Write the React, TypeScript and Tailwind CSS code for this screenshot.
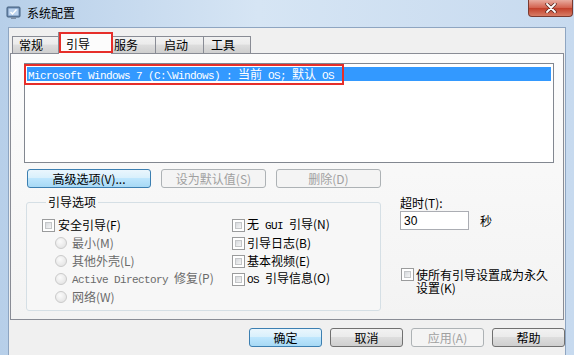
import React from 'react';

function L({ children }: { children: React.ReactNode }) {
  return <span className="whitespace-pre font-['Liberation_Mono',monospace] text-[11px] tracking-[-0.6px]">{children}</span>;
}

function Check() {
  return (
    <span className="w-[13px] h-[13px] shrink-0 border border-[#9a9b9c] bg-white p-[2px] flex">
      <span className="flex-1 border border-[#c4c6c8] bg-[linear-gradient(135deg,#d6d9dd,#f5f5f5)]" />
    </span>
  );
}

function Radio() {
  return (
    <span className="w-[12px] h-[12px] shrink-0 rounded-full border border-[#cacaca] bg-[radial-gradient(circle_at_40%_35%,#fbfbfb,#dedede)]" />
  );
}

function Btn({ children, w, kind = 'normal' }: { children: React.ReactNode; w: number; kind?: 'normal' | 'blue' | 'off' }) {
  const styles = {
    normal: 'border-[#707070] bg-[linear-gradient(#f2f2f2,#ebebeb_45%,#dddddd_50%,#cfcfcf)] text-black',
    blue: 'border-[#3c7fb1] bg-[linear-gradient(#eaf6fd,#d9f0fc_45%,#bee6fd_50%,#a7d9f5)] text-black',
    off: 'border-[#adb2b5] bg-[#f4f4f4] text-[#a0a0a0]',
  };
  return (
    <div
      className={`h-[19px] rounded-[3px] border flex items-center justify-center shrink-0 ${styles[kind]}`}
      style={{ width: w }}
    >
      {children}
    </div>
  );
}

const tabs = [
  { label: '常规', w: 47, pl: 6 },
  { label: '引导', w: 54, pl: 7, on: true },
  { label: '服务', w: 45, pl: 2 },
  { label: '启动', w: 49, pl: 8 },
  { label: '工具', w: 48, pl: 7 },
];

export default function App() {
  return (
    <div className="w-[574px] h-[355px] flex flex-col overflow-hidden bg-[linear-gradient(90deg,#b7cfe9,#d6e5f4_45%,#c7daef)] font-['Noto_Sans_CJK_SC',sans-serif] text-[12px] leading-[14px] text-black">
      {/* title bar */}
      <div className="h-[27px] flex items-start shrink-0">
        <div className="flex items-center h-[26px] pl-[6px] gap-[6px]">
          <svg width="15" height="14" viewBox="0 0 15 14">
            <rect x="1" y="1" width="13" height="10" rx="1" fill="#6d8bb3" stroke="#45617f" />
            <rect x="2.5" y="2.5" width="10" height="7" fill="#bcd3ee" />
            <path d="M4.5 6 L6.5 8 L10.5 3.5" stroke="#fff" strokeWidth="1.4" fill="none" />
            <rect x="5" y="11" width="5" height="2" fill="#7d8fa6" />
          </svg>
          <span className="text-[12px]">系统配置</span>
        </div>
        <div className="ml-auto mr-[1px] w-[45px] h-[17px] rounded-b-[4px] border border-t-0 border-[#7a3a30] bg-[linear-gradient(#e8ab9f,#d3624f_48%,#c2402b_52%,#d87d66)] flex items-center justify-center">
          <svg width="12" height="10" viewBox="0 0 12 10">
            <path d="M2 1 L10 9 M10 1 L2 9" stroke="#5a2820" strokeWidth="3.4" strokeLinecap="round" />
            <path d="M2 1 L10 9 M10 1 L2 9" stroke="#fff" strokeWidth="1.8" strokeLinecap="round" />
          </svg>
        </div>
      </div>

      <div className="flex flex-1 min-h-0">
        <div className="w-[8px] shrink-0" />
        <div className="flex-1 flex flex-col bg-[#f0f0f0] border-l border-r border-t border-[#8ea5c1]">
          {/* tab control */}
          <div className="mx-[1px] mt-[4px]">
            <div className="flex items-end h-[21px] pl-[2px]">
              {tabs.map((t, i) => (
                <div
                  key={t.label}
                  className={`relative flex items-center border border-b-0 border-[#898c95] ${i > 0 ? '-ml-px' : ''} ${
                    t.on
                      ? 'h-[22px] -mb-px z-10 bg-[#fcfcfc] pt-[1px]'
                      : 'h-[17px] bg-[linear-gradient(#f2f2f2,#ebebeb_45%,#dddddd_50%,#cfcfcf)]'
                  }`}
                  style={{ width: t.w, paddingLeft: t.pl }}
                >
                  {t.label}
                  {t.on && (
                    <div className="absolute left-0 top-[-1px] w-[54px] h-[21px] border-2 border-[#e62e2a]" />
                  )}
                </div>
              ))}
            </div>
            <div className="h-[267px] border border-[#898c95] bg-[linear-gradient(#fcfcfc,#f3f3f3)] pt-[9px] pl-[13px] flex flex-col">
              {/* list box */}
              <div className="relative w-[530px] h-[100px] border border-[#828790] bg-white pt-[3px] px-[2px] shrink-0">
                <div className="h-[14px] bg-[#3399ff] text-white pl-[1px] leading-[14px] whitespace-nowrap">
                  <L>Microsoft Windows 7 (C:\Windows) : </L>当前<L> OS; </L>默认<L> OS</L>
                </div>
                <div className="absolute left-[-1px] top-0 w-[320px] h-[21px] border-2 border-[#e62e2a]" />
              </div>

              {/* buttons */}
              <div className="flex mt-[6px] ml-[3px] gap-[10px]">
                <Btn w={124} kind="blue">高级选项(V)...</Btn>
                <Btn w={105} kind="off">设为默认值(S)</Btn>
                <Btn w={105} kind="off">删除(D)</Btn>
              </div>

              <div className="flex mt-[7px]">
                <fieldset className="ml-[2px] w-[355px] h-[116px] border border-[#d5dfe5] rounded-[3px] px-[15px] bg-[#f7f7f7]">
                  <legend className="ml-[4px] px-[2px] leading-[14px]">引导选项</legend>
                  <div className="flex pt-[7px]">
                    <div className="w-[190px] flex flex-col">
                      <div className="h-[18px] flex items-center gap-[3px]">
                        <Check />
                        <span>安全引导(F)</span>
                      </div>
                      {[
                        <>最小(M)</>,
                        <>其他外壳(L)</>,
                        <><L>Active Directory </L>修复(P)</>,
                        <>网络(W)</>,
                      ].map((c, i) => (
                        <div key={i} className="h-[18px] flex items-center gap-[5px] pl-[13px] text-[#6a6a6a] whitespace-nowrap">
                          <Radio />
                          <span>{c}</span>
                        </div>
                      ))}
                    </div>
                    <div className="flex flex-col">
                      {[
                        <>无<L> GUI </L>引导(N)</>,
                        <>引导日志(B)</>,
                        <>基本视频(E)</>,
                        <><L>OS </L>引导信息(O)</>,
                      ].map((c, i) => (
                        <div key={i} className="h-[18px] flex items-center gap-[2px] whitespace-nowrap">
                          <Check />
                          <span>{c}</span>
                        </div>
                      ))}
                    </div>
                  </div>
                </fieldset>

                <div className="ml-[19px] flex flex-col pt-[1px]">
                  <span className="leading-[14px]">超时(T):</span>
                  <div className="flex items-center mt-[1px]">
                    <div className="w-[69px] h-[19px] border border-[#abadb3] bg-white flex items-center pl-[3px]">
                      <span className="font-['Liberation_Sans',sans-serif]">30</span>
                    </div>
                    <span className="ml-[11px]">秒</span>
                  </div>
                  <div className="flex items-start gap-[2px] mt-[38px] ml-[1px]">
                    <Check />
                    <span className="w-[136px] leading-[13px]">使所有引导设置成为永久设置(K)</span>
                  </div>
                </div>
              </div>
            </div>
          </div>

          {/* dialog buttons */}
          <div className="flex justify-end mt-[8px] gap-[8px]">
            <Btn w={73} kind="blue">确定</Btn>
            <Btn w={73}>取消</Btn>
            <Btn w={73} kind="off">应用(A)</Btn>
            <Btn w={73}>帮助</Btn>
          </div>
        </div>
        <div className="w-[8px] shrink-0" />
      </div>
    </div>
  );
}
